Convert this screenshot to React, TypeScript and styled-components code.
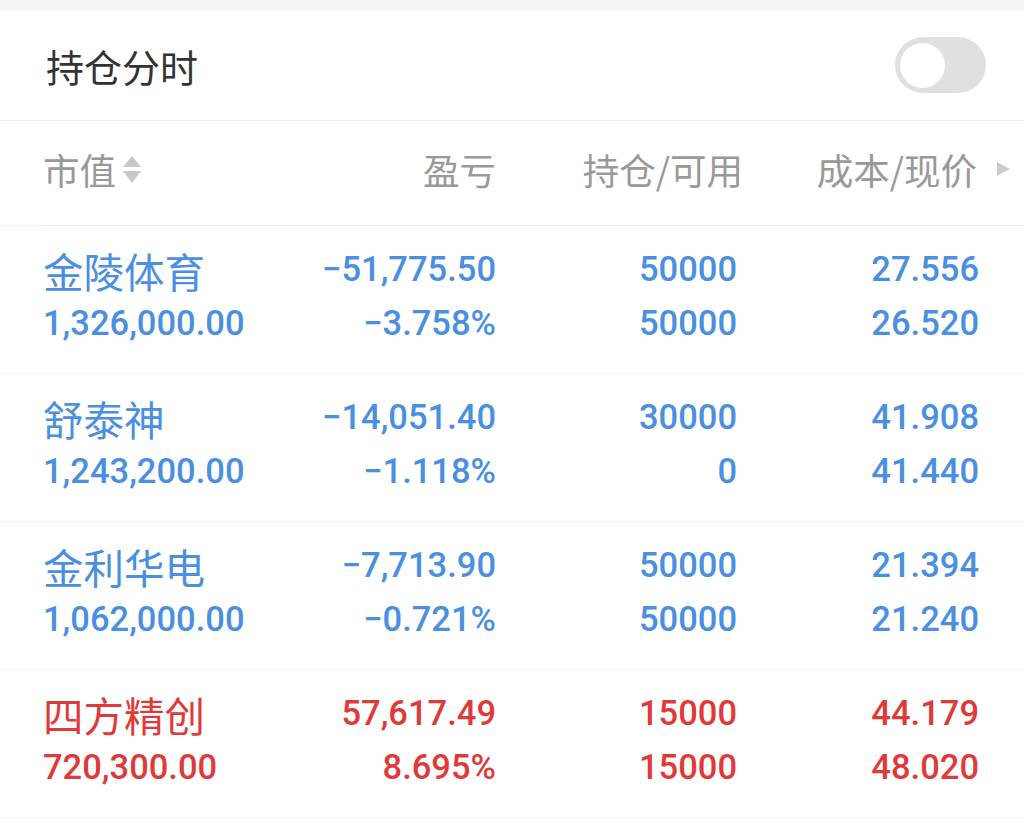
import React from 'react'
import styled, { createGlobalStyle } from 'styled-components'

const GlobalStyle = createGlobalStyle`
  html, body {
    margin: 0;
    padding: 0;
    background: #ffffff;
  }
  body {
    font-family: "Noto Sans CJK SC", "Noto Sans", sans-serif;
  }
`

const BLUE = '#4a8fe0'
const RED = '#df3a3a'

const Page = styled.div`
  width: 1024px;
  min-height: 823px;
  background: #fff;
  border-top: 10px solid #f4f4f4;
  box-sizing: border-box;
`

const TitleBar = styled.div`
  height: 110px;
  display: flex;
  align-items: center;
  justify-content: space-between;
  padding: 0 38px 0 46px;
  border-bottom: 1px solid #f0f0f0;
`

const Title = styled.div`
  font-size: 38px;
  color: #333;
`

const Toggle = styled.div`
  width: 91px;
  height: 56px;
  border-radius: 28px;
  background: #e0e0e0;
  display: flex;
  align-items: center;
  padding-left: 5px;
  box-sizing: border-box;
`

const Knob = styled.div`
  width: 45px;
  height: 45px;
  border-radius: 50%;
  background: #fff;
`

const Header = styled.div`
  background: linear-gradient(#f6f6f6, #f6f6f6) left bottom / 100% 1px no-repeat;
`

const HeaderRow = styled.div`
  height: 96px;
  padding-bottom: 8px;
  margin-left: 43px;
  display: grid;
  grid-template-columns: 202px 251px 247px 234px 1fr;
  align-items: center;
  border-bottom: 1px solid #e8e8e8;
`

const HeadCell = styled.div<{ $right?: boolean }>`
  display: flex;
  align-items: center;
  justify-content: ${(p) => (p.$right ? 'flex-end' : 'flex-start')};
  font-size: 36.5px;
  color: #999;
  white-space: nowrap;
`

const ArrowCell = styled.div`
  display: flex;
  justify-content: center;
  padding-left: 6px;
`

const Row = styled.div`
  display: grid;
  grid-template-columns: 202px 251px 241px 242px;
  padding: 16px 0 23px 43px;
  border-bottom: 1px solid #f5f5f5;
`

const Cell = styled.div<{ $right?: boolean; $color: string }>`
  display: flex;
  flex-direction: column;
  align-items: ${(p) => (p.$right ? 'flex-end' : 'flex-start')};
  color: ${(p) => p.$color};
`

const Name = styled.div`
  height: 54px;
  line-height: 54px;
  font-size: 40.5px;
  white-space: nowrap;
  margin-top: 2px;
  margin-bottom: -2px;
`

const Num = styled.div`
  height: 54px;
  line-height: 54px;
  font-family: Roboto, "Noto Sans", sans-serif;
  font-weight: 500;
  font-size: 34.5px;
  white-space: nowrap;
`

const SortIcon = () => (
  <svg width="20" height="28" viewBox="0 0 20 28" style={{ marginLeft: 6, marginTop: 2 }}>
    <polygon points="10,0 19,11 1,11" fill="#c8c8c8" />
    <polygon points="1,15 19,15 10,27" fill="#c8c8c8" />
  </svg>
)

const RightArrow = () => (
  <svg width="13" height="14" viewBox="0 0 13 14">
    <polygon points="0,0 13,7 0,14" fill="#cccccc" />
  </svg>
)

type Stock = {
  name: string
  value: string
  pnl: string
  pct: string
  hold: string
  avail: string
  cost: string
  price: string
  up?: boolean
}

const stocks: Stock[] = [
  { name: '金陵体育', value: '1,326,000.00', pnl: '−51,775.50', pct: '−3.758%', hold: '50000', avail: '50000', cost: '27.556', price: '26.520' },
  { name: '舒泰神', value: '1,243,200.00', pnl: '−14,051.40', pct: '−1.118%', hold: '30000', avail: '0', cost: '41.908', price: '41.440' },
  { name: '金利华电', value: '1,062,000.00', pnl: '−7,713.90', pct: '−0.721%', hold: '50000', avail: '50000', cost: '21.394', price: '21.240' },
  { name: '四方精创', value: '720,300.00', pnl: '57,617.49', pct: '8.695%', hold: '15000', avail: '15000', cost: '44.179', price: '48.020', up: true },
]

const App = () => (
  <Page>
    <GlobalStyle />
    <TitleBar>
      <Title>持仓分时</Title>
      <Toggle>
        <Knob />
      </Toggle>
    </TitleBar>
    <Header>
      <HeaderRow>
        <HeadCell>
          市值
          <SortIcon />
        </HeadCell>
        <HeadCell $right>盈亏</HeadCell>
        <HeadCell $right>持仓/可用</HeadCell>
        <HeadCell $right>成本/现价</HeadCell>
        <ArrowCell>
          <RightArrow />
        </ArrowCell>
      </HeaderRow>
    </Header>
    {stocks.map((s) => {
      const color = s.up ? RED : BLUE
      return (
        <Row key={s.name}>
          <Cell $color={color}>
            <Name>{s.name}</Name>
            <Num>{s.value}</Num>
          </Cell>
          <Cell $right $color={color}>
            <Num>{s.pnl}</Num>
            <Num>{s.pct}</Num>
          </Cell>
          <Cell $right $color={color}>
            <Num>{s.hold}</Num>
            <Num>{s.avail}</Num>
          </Cell>
          <Cell $right $color={color}>
            <Num>{s.cost}</Num>
            <Num>{s.price}</Num>
          </Cell>
        </Row>
      )
    })}
  </Page>
)

export default App
